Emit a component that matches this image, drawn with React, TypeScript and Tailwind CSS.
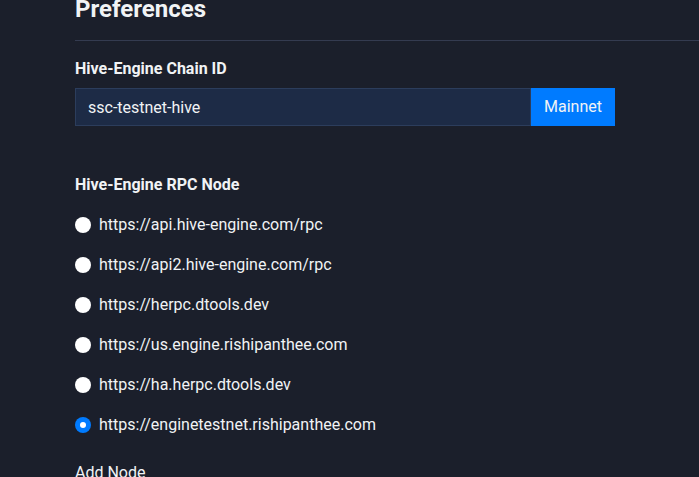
const nodes = [
  "https://api.hive-engine.com/rpc",
  "https://api2.hive-engine.com/rpc",
  "https://herpc.dtools.dev",
  "https://us.engine.rishipanthee.com",
  "https://ha.herpc.dtools.dev",
  "https://enginetestnet.rishipanthee.com",
];

export default function App() {
  const selected = nodes[5];
  return (
    <div className="h-[477px] w-[699px] overflow-hidden bg-[#1b1f2b] text-[#f1f3f5] font-['Roboto',sans-serif]">
      <div className="ml-[75px] w-[700px] -mt-[9px]">
        <h2 className="text-[24px] font-bold leading-[36px]">Preferences</h2>
        <div className="mt-[13px] border-t border-[#343b50]" />

        <div className="mt-[19px]">
          <label className="block text-[16px] font-bold leading-[18px]">Hive-Engine Chain ID</label>
          <div className="mt-[10px] flex h-[38px] w-[540px]">
            <input
              readOnly
              value="ssc-testnet-hive"
              className="h-full w-[456px] border border-[#2c3d5c] bg-[#1d2b46] px-[12px] text-[16px] text-[#f1f3f5] outline-none"
            />
            <button className="h-full w-[84px] bg-[#007bff] text-[16px] text-[#f1f3f5]">Mainnet</button>
          </div>
        </div>

        <div className="mt-[50px]">
          <label className="block text-[16px] font-bold leading-[18px]">Hive-Engine RPC Node</label>
          <div className="mt-[19px] flex flex-col gap-[16px]">
            {nodes.map((n) => (
              <label key={n} className="flex h-[24px] items-center gap-[8px] text-[16px]">
                {n === selected ? (
                  <span className="flex h-[16px] w-[16px] items-center justify-center rounded-full bg-[#007bff]">
                    <span className="h-[6px] w-[6px] rounded-full bg-white" />
                  </span>
                ) : (
                  <span className="h-[16px] w-[16px] rounded-full bg-white" />
                )}
                <span>{n}</span>
              </label>
            ))}
          </div>
          <div className="mt-[24px] text-[16px] leading-[24px]">Add Node</div>
        </div>
      </div>
    </div>
  );
}
